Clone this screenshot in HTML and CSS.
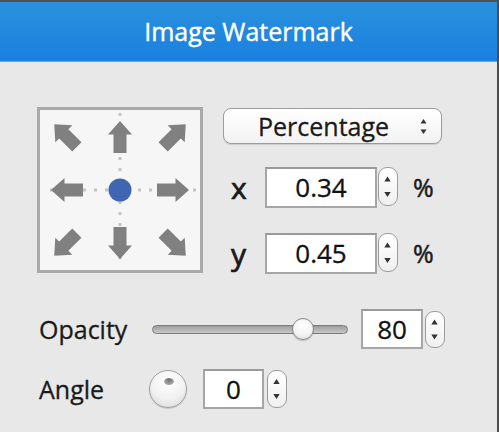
FILE: index.html
```html
<!DOCTYPE html>
<html>
<head>
<meta charset="utf-8">
<link rel="stylesheet" href="styles.css">
</head>
<body>
<div class="window">
  <div class="titlebar">Image Watermark</div>
  <div class="content">
    <div class="top">
      <div class="pad">
        <svg viewBox="0 0 160 160" width="160" height="160">
          <defs>
            <path id="ar" d="M0,-69 L12,-55.5 L6.5,-55.5 L6.5,-37 L-6.5,-37 L-6.5,-55.5 L-12,-55.5 Z"/>
          </defs>
          <g stroke="#c4c4c4" stroke-width="3" stroke-dasharray="3 8">
            <line x1="80" y1="3" x2="80" y2="157"/>
            <line x1="10" y1="80" x2="158" y2="80"/>
          </g>
          <g fill="#808080" transform="translate(80,80)">
            <use href="#ar"/>
            <use href="#ar" transform="rotate(90)"/>
            <use href="#ar" transform="rotate(180)"/>
            <use href="#ar" transform="rotate(270)"/>
            <use href="#ar" transform="rotate(45) translate(0,-24)"/>
            <use href="#ar" transform="rotate(135) translate(0,-24)"/>
            <use href="#ar" transform="rotate(225) translate(0,-24)"/>
            <use href="#ar" transform="rotate(315) translate(0,-24)"/>
          </g>
          <circle cx="80" cy="80" r="11.5" fill="#4066b3"/>
        </svg>
      </div>
      <div class="controls">
        <div class="popup">
          <span class="popup-label">Percentage</span>
          <svg class="popup-arrows" width="7" height="15" viewBox="0 0 7 15">
            <path d="M3.5,0 L6.5,4.5 L0.5,4.5 Z M3.5,15 L6.5,10.5 L0.5,10.5 Z" fill="#333"/>
          </svg>
        </div>
        <div class="coord-row first">
          <span class="axis">x</span>
          <div class="field wide">0.34</div>
          <div class="stepper">
            <svg width="20" height="39" viewBox="0 0 20 39"><path d="M9.5,9.5 L12.7,14.5 L6.3,14.5 Z M9.5,30 L12.7,25 L6.3,25 Z" fill="#333"/></svg>
          </div>
          <span class="unit">%</span>
        </div>
        <div class="coord-row second">
          <span class="axis">y</span>
          <div class="field wide">0.45</div>
          <div class="stepper">
            <svg width="20" height="39" viewBox="0 0 20 39"><path d="M9.5,9.5 L12.7,14.5 L6.3,14.5 Z M9.5,30 L12.7,25 L6.3,25 Z" fill="#333"/></svg>
          </div>
          <span class="unit">%</span>
        </div>
      </div>
    </div>
    <div class="row opacity-row">
      <span class="label opacity-label">Opacity</span>
      <div class="slider">
        <div class="track"></div>
        <div class="thumb"></div>
      </div>
      <div class="field small opacity-field">80</div>
      <div class="stepper tight">
        <svg width="20" height="37" viewBox="0 0 20 37"><path d="M9.5,8.5 L12.7,13.5 L6.3,13.5 Z M9.5,28.5 L12.7,23.5 L6.3,23.5 Z" fill="#333"/></svg>
      </div>
    </div>
    <div class="row angle-row">
      <span class="label angle-label">Angle</span>
      <div class="knob"><div class="knob-dot"></div></div>
      <div class="field small angle-field">0</div>
      <div class="stepper angle-stepper">
        <svg width="20" height="38" viewBox="0 0 20 38"><path d="M9.5,9 L12.7,14 L6.3,14 Z M9.5,29 L12.7,24 L6.3,24 Z" fill="#333"/></svg>
      </div>
    </div>
  </div>
</div>
</body>
</html>
```
FILE: styles.css
```css
* { box-sizing: border-box; }
html, body {
  margin: 0;
  padding: 0;
  width: 499px;
  height: 432px;
  overflow: hidden;
  background: #e8e8e8;
  font-family: "Open Sans", "DejaVu Sans", sans-serif;
  color: #1a1a1a;
}
.window {
  width: 499px;
  height: 432px;
  border-top: 2px solid #505050;
  border-right: 2px solid #4e4e4e;
  background: #e8e8e8;
  -webkit-text-stroke: 0.3px;
}
.titlebar {
  height: 60px;
  background: linear-gradient(#2b91dc, #1980e1);
  border-bottom: 1px solid #6aa6dc;
  color: #fff;
  font-size: 25px;
  line-height: 58px;
  text-align: center;
  -webkit-text-stroke: 0.4px #fff;
}
.content {
  padding: 45px 0 0 37px;
}
.top {
  display: flex;
  gap: 20px;
}
.pad {
  width: 166px;
  height: 166px;
  border: 3px solid #a9a9a9;
  background: #f6f6f6;
}
.pad svg { display: block; }
.controls {
  display: flex;
  flex-direction: column;
  padding-top: 1px;
}
.popup {
  width: 219px;
  height: 36px;
  border: 1px solid #9c9c9c;
  border-radius: 8px;
  background: linear-gradient(#ffffff, #f2f2f2);
  box-shadow: 0 1px 1px rgba(0,0,0,0.12);
  display: flex;
  align-items: center;
  padding-left: 34px;
  padding-right: 14px;
}
.popup-label {
  flex: 1;
  font-size: 25px;
  line-height: 34px;
}
.popup-arrows { display: block; }
.coord-row {
  display: flex;
  align-items: center;
  height: 41px;
}
.coord-row.first { margin-top: 23px; }
.coord-row.second { margin-top: 25px; }
.axis {
  width: 42px;
  padding-left: 8px;
  font-size: 30px;
  line-height: 41px;
  -webkit-text-stroke: 0.7px;
}
.field {
  background: #fff;
  border: 2px solid #a6a6a6;
  border-top-color: #9a9a9a;
  text-align: center;
  font-size: 26px;
  color: #111;
}
.field.wide {
  width: 112px;
  height: 41px;
  line-height: 37px;
}
.stepper {
  width: 20px;
  height: 39px;
  margin-left: 1px;
  border: 1px solid #9b9b9b;
  border-radius: 9px;
  background: linear-gradient(#ffffff, #f0f0f0);
  overflow: hidden;
  align-self: flex-start;
}
.stepper svg { display: block; margin: -1px 0 0 -1px; }
.unit {
  margin-left: 15px;
  font-size: 25px;
  line-height: 41px;
  -webkit-text-stroke: 0.5px;
}
.row {
  display: flex;
  align-items: center;
  height: 40px;
}
.opacity-row { margin-top: 35px; }
.angle-row { margin-top: 20px; }
.label {
  font-size: 25px;
  padding-left: 2px;
}
.opacity-label { width: 113px; }
.angle-label { width: 112px; }
.slider {
  position: relative;
  width: 200px;
  height: 24px;
  display: flex;
  align-items: center;
  padding: 0 2px;
}
.track {
  flex: 1;
  height: 9px;
  border: 1px solid #7b7b7b;
  border-radius: 5px;
  background: linear-gradient(#9d9d9d, #c9c9c9);
}
.thumb {
  position: absolute;
  left: 142px;
  top: 1px;
  width: 22px;
  height: 22px;
  border-radius: 50%;
  border: 1px solid #8a8a8a;
  background: radial-gradient(circle at 50% 35%, #ffffff, #f3f3f3 55%, #d9d9d9);
  box-shadow: 0 1px 1px rgba(0,0,0,0.2);
}
.field.small {
  height: 40px;
  line-height: 36px;
}
.opacity-field {
  width: 62px;
  margin-left: 11px;
}
.stepper.tight {
  height: 37px;
  margin-left: 2px;
  align-self: center;
}
.knob {
  position: relative;
  width: 38px;
  height: 38px;
  border-radius: 50%;
  border: 1px solid #a0a0a0;
  background: radial-gradient(circle at 50% 30%, #ffffff, #f1f1f1 55%, #d6d6d6);
  box-shadow: 0 1px 1px rgba(0,0,0,0.15);
}
.knob-dot {
  position: absolute;
  left: 14px;
  top: 7px;
  width: 10px;
  height: 7px;
  border-radius: 50%;
  background: radial-gradient(ellipse at 50% 25%, #707070, #a8a8a8 70%, #d0d0d0);
}
.angle-field {
  width: 61px;
  margin-left: 16px;
}
.angle-stepper {
  height: 38px;
  margin-left: 3px;
  align-self: center;
}
```
